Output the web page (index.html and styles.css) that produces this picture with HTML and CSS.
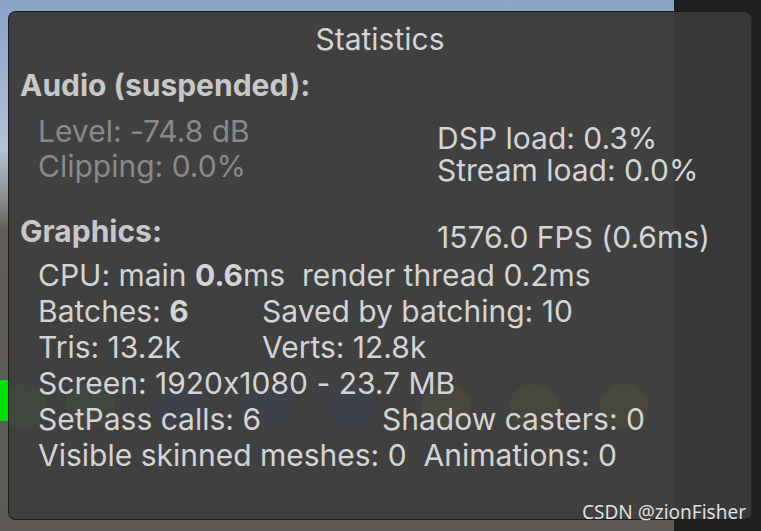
FILE: index.html
```html
<!DOCTYPE html>
<html>
<head>
<meta charset="utf-8">
<link rel="stylesheet" href="styles.css">
</head>
<body>
<div class="scene">
  <div class="green-bar"></div>
  <div class="panel">
    <div class="blobs">
      <span class="blob g" style="left:-12px"></span>
      <span class="blob g" style="left:56px"></span>
      <span class="blob b" style="left:145px"></span>
      <span class="blob b" style="left:233px"></span>
      <span class="blob b" style="left:318px"></span>
      <span class="blob y" style="left:412px"></span>
      <span class="blob y" style="left:500px"></span>
      <span class="blob y" style="left:590px"></span>
    </div>
    <div class="title">Statistics</div>
    <div class="heading">Audio (suspended):</div>
    <div class="audio">
      <div class="audio-left">
        <div class="muted">Level: -74.8 dB</div>
        <div class="muted">Clipping: 0.0%</div>
      </div>
      <div class="audio-right">
        <div>DSP load: 0.3%</div>
        <div>Stream load: 0.0%</div>
      </div>
    </div>
    <div class="gfx-head">
      <div class="heading gfx-title">Graphics:</div>
      <div class="fps">1576.0 FPS (0.6ms)</div>
    </div>
    <div class="rows">
      <div class="row pre">CPU: main <b>0.6</b>ms  render thread 0.2ms</div>
      <div class="row"><span class="c1">Batches: <b>6</b></span><span>Saved by batching: 10</span></div>
      <div class="row"><span class="c1">Tris: 13.2k</span><span>Verts: 12.8k</span></div>
      <div class="row">Screen: 1920x1080 - 23.7 MB</div>
      <div class="row"><span class="c2">SetPass calls: 6</span><span>Shadow casters: 0</span></div>
      <div class="row pre">Visible skinned meshes: 0  Animations: 0</div>
    </div>
  </div>
  <div class="watermark">CSDN @zionFisher</div>
</div>
</body>
</html>
```
FILE: styles.css
```css
html, body {
  margin: 0;
  padding: 0;
}
body {
  width: 761px;
  height: 531px;
  overflow: hidden;
  font-family: Inter, "Noto Sans", sans-serif;
}
.scene {
  position: relative;
  width: 761px;
  height: 531px;
  padding: 11px 0 0 8px;
  box-sizing: border-box;
  background:
    linear-gradient(to right, transparent 0 674px, #1f1f1f 674px),
    linear-gradient(to bottom, #89a3c6 0, #97afcf 60px, #b3c3d3 150px, #8d8c8a 200px, #625d58 230px, #5e5a55 100%);
}
.green-bar {
  position: absolute;
  left: 0;
  top: 380px;
  width: 8px;
  height: 41px;
  background: #00e000;
}
.panel {
  position: relative;
  width: 744px;
  height: 509px;
  box-sizing: border-box;
  border: 1px solid #1c1c1c;
  border-right-color: #2a2a2a;
  border-radius: 8px;
  background: linear-gradient(to right, #404040 0 665px, #393939 665px);
  padding: 9px 0 0 11px;
  color: #d4d4d4;
  font-size: 30px;
  line-height: 36px;
  font-variant-ligatures: no-contextual;
  font-feature-settings: "calt" 0;
  overflow: hidden;
}
.title {
  position: relative;
  text-align: center;
  margin-left: -11px;
  height: 46px;
}
.heading {
  position: relative;
  font-weight: 700;
  color: #c8c8c8;
}
.audio {
  position: relative;
  display: flex;
  margin-top: 11px;
}
.audio-left {
  width: 399px;
  padding-left: 18px;
  line-height: 35px;
}
.muted {
  color: #8a8a8a;
}
.audio-right {
  padding-top: 8px;
  line-height: 32px;
}
.gfx-head {
  position: relative;
  display: flex;
  margin-top: 27px;
}
.gfx-title {
  width: 417px;
}
.fps {
  padding-top: 6px;
}
.rows {
  position: relative;
  padding-left: 18px;
  margin-top: 2px;
  line-height: 36px;
}
.row {
  display: flex;
  white-space: pre;
}
.pre {
  display: block;
}
.c1 {
  width: 224px;
}
.c2 {
  width: 344px;
}
b {
  font-weight: 700;
}
.blobs {
  position: absolute;
  left: 0;
  top: 366px;
  width: 100%;
  height: 60px;
  pointer-events: none;
}
.blob {
  position: absolute;
  top: 6px;
  width: 50px;
  height: 44px;
  border-radius: 50%;
}
.blob.g { background: rgba(70, 110, 60, 0.14); }
.blob.b { background: rgba(60, 70, 120, 0.18); }
.blob.y { background: rgba(110, 110, 50, 0.14); }
.watermark {
  position: absolute;
  right: 15px;
  bottom: 8px;
  font-family: "Noto Sans", "Open Sans", sans-serif;
  font-size: 19px;
  line-height: 22px;
  color: #e2e2e2;
  text-shadow: 0 0 1px rgba(0,0,0,0.5);
}
```
